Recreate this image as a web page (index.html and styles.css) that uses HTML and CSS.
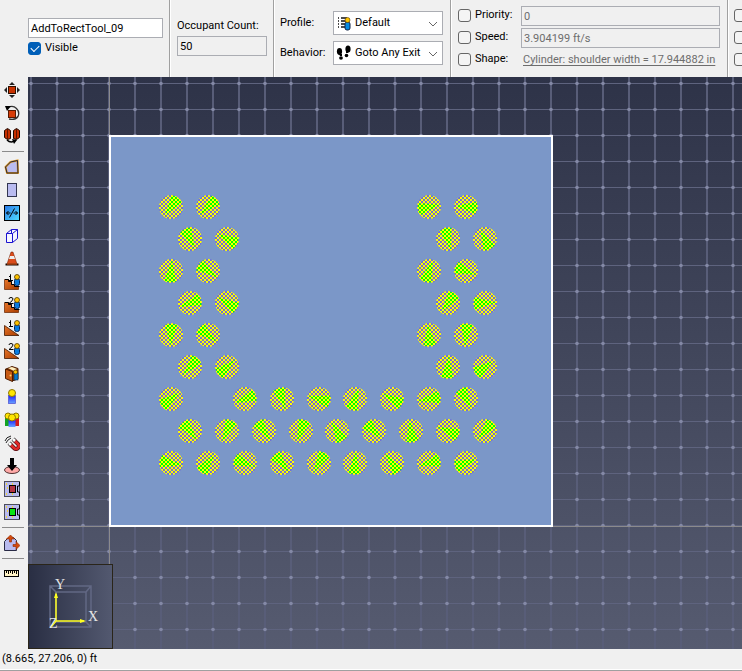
FILE: index.html
```html
<!DOCTYPE html>
<html lang="en">
<head>
<meta charset="utf-8">
<title>Occupant group editor</title>
<link rel="stylesheet" href="styles.css">
</head>
<body>
<div class="app">
  <header class="properties">
    <section class="panel panel-name">
      <input class="field field-name" type="text" value="AddToRectTool_09" aria-label="Name">
      <label class="check"><input type="checkbox" checked>Visible</label>
    </section>
    <section class="panel panel-count">
      <label for="count">Occupant Count:</label>
      <input class="field" id="count" type="text" value="50" readonly>
    </section>
    <section class="panel panel-profile">
      <label for="profile">Profile:</label>
      <div class="combo">
        <select id="profile"><option>Default</option></select>
        <svg class="combo-icon" viewBox="0 0 16 16" aria-hidden="true">
          <path d="M2 3h1M2 6h1M2 9h1M2 12h1M5 3h6M5 6h6M5 9h4M5 12h4" stroke="#111" stroke-width="1.500"/>
          <rect x="9" y="7" width="5" height="8" rx="2" fill="#078be0" stroke="#124"/>
          <circle cx="11.500" cy="5" r="2.500" fill="#ffc400" stroke="#543800" stroke-width=".6"/>
        </svg>
        <svg class="chevron" viewBox="0 0 10 6" aria-hidden="true"><path d="M1 1l4 4 4-4"/></svg>
      </div>
      <label for="behavior">Behavior:</label>
      <div class="combo">
        <select id="behavior"><option>Goto Any Exit</option></select>
        <svg class="combo-icon" viewBox="0 0 16 16" aria-hidden="true">
          <g fill="#000"><ellipse cx="3.500" cy="6.500" rx="2.600" ry="3.400"/><path d="M3 9h3v2H4z"/><ellipse cx="5" cy="13" rx="1.900" ry="1.800"/>
          <ellipse cx="12" cy="4" rx="2.600" ry="3.500"/><path d="M10 6h3l-1 2h-2z"/><ellipse cx="10.500" cy="10.500" rx="1.800" ry="1.700"/></g>
        </svg>
        <svg class="chevron" viewBox="0 0 10 6" aria-hidden="true"><path d="M1 1l4 4 4-4"/></svg>
      </div>
    </section>
    <section class="panel panel-overrides">
      <label class="check"><input type="checkbox">Priority:</label>
      <input class="field" type="text" value="0" aria-label="Priority value" disabled>
      <label class="check"><input type="checkbox">Speed:</label>
      <input class="field" type="text" value="3.904199 ft/s" aria-label="Speed value" disabled>
      <label class="check"><input type="checkbox">Shape:</label>
      <a class="shape-link" href="#">Cylinder: shoulder width = 17.944882 in</a>
    </section>
    <section class="panel panel-more">
      <input type="checkbox" aria-label="Override 1">
      <input type="checkbox" aria-label="Override 2">
      <input type="checkbox" aria-label="Override 3">
    </section>
  </header>

  <svg class="defs" aria-hidden="true">
    <defs>
      <linearGradient id="wood" x1="0" y1="0" x2="1" y2="1"><stop offset="0" stop-color="#e8762a"/><stop offset="1" stop-color="#a83c00"/></linearGradient>
      <linearGradient id="blue" x1="0" y1="0" x2="1" y2="1"><stop offset="0" stop-color="#2b78e8"/><stop offset="1" stop-color="#4fe0ff"/></linearGradient>
      <linearGradient id="suit" x1="0" y1="0" x2="0" y2="1"><stop offset="0" stop-color="#2020ff"/><stop offset="1" stop-color="#68a4ff"/></linearGradient>
      <symbol id="person" viewBox="0 0 16 16">
        <rect x="10.500" y="4.500" width="5" height="7" rx="2" fill="#087be0" stroke="#05295c"/>
        <circle cx="13" cy="3" r="2.500" fill="#ffc400" stroke="#4c3500" stroke-width=".8"/>
      </symbol>
      <symbol id="one" viewBox="0 0 16 16"><path d="M5 2.500h1.500V.5v6M5 6.500h4" fill="none" stroke="#000"/></symbol>
      <symbol id="two" viewBox="0 0 16 16"><path d="M5 2q0-1.500 2-1.500t2 1.500Q9 3.500 5 6.500h4.500" fill="none" stroke="#000"/></symbol>
      <symbol id="stairs" viewBox="0 0 16 16"><path d="M.5 15.500v-10h4v2h3v3h3v2h4v3z" fill="url(#wood)" stroke="#642200" stroke-width=".7"/><path d="M1 5.500h3.500v2h3v3h3v2h5" fill="none" stroke="#000"/></symbol>
      <symbol id="ramp" viewBox="0 0 16 16"><path d="M.5 5.500v10h14.500z" fill="url(#wood)" stroke="#421800" stroke-width=".8"/></symbol>
    </defs>
  </svg>

  <main class="workspace">
    <nav class="tools" aria-label="Tools">
      <button aria-label="Move"><svg viewBox="0 0 16 16"><rect x="4.500" y="4.500" width="7" height="7" fill="#c83200" stroke="#301000"/><path d="M8 0l3 3H5zM8 16l3-3H5zM0 8l3-3v6zM16 8l-3-3v6z" fill="#222"/></svg></button>
      <button aria-label="Rotate"><svg viewBox="0 0 16 16"><path d="M4 2.500q5-2.500 8.500 1t1.500 8q-3 4-9 2.500" fill="none" stroke="#333" stroke-width="1.300"/><path d="M1 1h6L3 6z" fill="#000"/><rect x="4.500" y="5.500" width="7" height="7" fill="#d63c08" stroke="#581800"/></svg></button>
      <button aria-label="Mirror"><svg viewBox="0 0 16 16"><path d="M.5 2.500l3-2 3 2v8l-3 1-3-2zM15.500 2.500l-3-2-3 2v8l3 1 3-2z" fill="#c83000" stroke="#200800"/><path d="M3.500 1v10M12.500 1v10" stroke="#611600"/><path d="M3 12q4 4 9 0" fill="none" stroke="#000" stroke-width="1.500"/><path d="M8 11l5 1-3 4z" fill="#000"/></svg></button>
      <hr>
      <button aria-label="Polygon room"><svg viewBox="0 0 16 16"><path d="M1.500 8l5-5 7-1.500.5 12.500H3z" fill="#babcf0" stroke="#e39a20" stroke-width="2"/><path d="M1.500 8l5-5 7-1.500.5 12.500H3z" fill="none" stroke="#25263c"/></svg></button>
      <button aria-label="Rectangular room"><svg viewBox="0 0 16 16"><rect x="3.500" y="1.500" width="9" height="13" fill="#babcf0" stroke="#333650"/></svg></button>
      <button aria-label="Wall"><svg viewBox="0 0 16 16"><rect x=".5" y=".5" width="15" height="15" fill="url(#blue)" stroke="#000"/><path d="M4.500 6l-2 2 2 2M2.500 8h4M11.500 6l2 2-2 2M13.500 8h-4M10.500 3.500l-5 9" fill="none" stroke="#000"/></svg></button>
      <button aria-label="Obstruction"><svg viewBox="0 0 16 16"><path d="M2.500 5.500l5-4h6v9l-5 4h-6zM2.500 5.500h6v9M8.500 5.500l5-4M7.500 1.500v4" fill="#f6f6ff" stroke="#1b12d0"/></svg></button>
      <button aria-label="Cone"><svg viewBox="0 0 16 16"><path d="M7 1h2l4 12H3z" fill="#dc4c1b" stroke="#651b00" stroke-width=".5"/><path d="M6 5h4l1 3H5z" fill="#eee"/><path d="M1.500 13.500h13" stroke="#1c0800" stroke-width="2"/><path d="M3 13h10" stroke="#f06420"/></svg></button>
      <button aria-label="One-point stairs"><svg viewBox="0 0 16 16"><use href="#stairs"/><use href="#person"/><use href="#one"/></svg></button>
      <button aria-label="Two-point stairs"><svg viewBox="0 0 16 16"><use href="#stairs"/><use href="#person"/><use href="#two"/></svg></button>
      <button aria-label="One-point ramp"><svg viewBox="0 0 16 16"><use href="#ramp"/><use href="#person"/><use href="#one"/></svg></button>
      <button aria-label="Two-point ramp"><svg viewBox="0 0 16 16"><use href="#ramp"/><use href="#person"/><use href="#two"/></svg></button>
      <button aria-label="Door"><svg viewBox="0 0 16 16"><path d="M2 3l6-2.500 6 2V13l-6 2z" fill="#8a3a08" stroke="#4c1c00"/><path d="M4 2l4-1 5 2-3 2z" fill="#fff0c0"/><path d="M1.500 3l7 2.500v10l-7-3z" fill="#c75a14" stroke="#4c1c00"/><rect x="10" y="7" width="4" height="7" fill="#0879cc" stroke="#042746" stroke-width=".6"/><circle cx="11.500" cy="6" r="2" fill="#ffc400" stroke="#4c3500" stroke-width=".6"/><circle cx="6.500" cy="9.500" r="1" fill="#ffd766"/></svg></button>
      <button aria-label="Occupant"><svg viewBox="0 0 16 16"><rect x="4.500" y="6.500" width="7" height="8" fill="url(#suit)" stroke="#4b4bd0" stroke-width=".7"/><circle cx="8" cy="4" r="3.500" fill="#ffe600" stroke="#8e7600"/></svg></button>
      <button aria-label="Occupant group"><svg viewBox="0 0 16 16"><rect x="1" y="6" width="4" height="8" fill="#12a322"/><rect x="11" y="6" width="4" height="8" fill="#d31b18"/><rect x="4.500" y="8" width="7" height="7" fill="url(#suit)"/><g fill="#ffe600" stroke="#8e7600"><circle cx="4" cy="4" r="3"/><circle cx="12" cy="4" r="3"/><circle cx="8" cy="5.500" r="3.500"/></g></svg></button>
      <button aria-label="Attractor"><svg viewBox="0 0 16 16"><path d="M6 9l4 4q2 2 4 0t0-4l-4-4" fill="none" stroke="#571015" stroke-width="4"/><path d="M6 9l4 4q2 2 4 0t0-4l-4-4" fill="none" stroke="#e02928" stroke-width="2.500"/><path d="M5 8l2 2M9 4l2 2" stroke="#444" stroke-width="4"/><path d="M5 8l2 2M9 4l2 2" stroke="#fff" stroke-width="2.500"/><path d="M1 6q1-4 6-5M2 8q1-3 5-5" fill="none" stroke="#222"/></svg></button>
      <button aria-label="Waypoint"><svg viewBox="0 0 16 16"><ellipse cx="8" cy="12" rx="7.500" ry="3.500" fill="#ffa9a7" stroke="#503030"/><path d="M6 0h4v7h3l-5 6-5-6h3z" fill="#000"/></svg></button>
      <button aria-label="Refuge area"><svg viewBox="0 0 16 16"><rect x=".5" y=".5" width="15" height="15" fill="#b9bbef" stroke="#4c4d5c"/><path d="M2 3h1M8 3h1M3 7h1M2 13h1M8 13h1" stroke="#ffe000" stroke-width="1.500"/><rect x="5.500" y="4.500" width="6" height="7" fill="#b33443" stroke="#000"/><path d="M15.500 1v4h-2v6h2v4" fill="none" stroke="#000"/></svg></button>
      <button aria-label="Target area"><svg viewBox="0 0 16 16"><rect x=".5" y=".5" width="15" height="15" fill="#b9bbef" stroke="#4c4d5c"/><path d="M2 3h1M8 3h1M3 7h1M2 13h1M8 13h1" stroke="#ffe000" stroke-width="1.500"/><rect x="5.500" y="4.500" width="6" height="7" fill="#08e413" stroke="#000"/><path d="M15.500 1v4h-2v6h2v4" fill="none" stroke="#000"/></svg></button>
      <hr>
      <button aria-label="Edit shape"><svg viewBox="0 0 16 16"><path d="M.5 15.500v-9l4-4h5l3 3v10z" fill="#b9bbef" stroke="#292a45"/><path d="M6.500 0l4 4h-3v3h-2V4h-3zM16 10.500l-4-4v3H9v2h3v3z" fill="#d44b0b" stroke="#8d2700" stroke-width=".6"/></svg></button>
      <hr>
      <button aria-label="Measure"><svg viewBox="0 0 16 16"><rect x=".5" y="4.500" width="14" height="6" fill="#fff2c5" stroke="#000"/><path d="M2.500 5v2M4.500 5v3M6.500 5v2M8.500 5v3M10.500 5v2M12.500 5v3" stroke="#000"/></svg></button>
    </nav>

    <div class="viewport">
      <svg class="scene" role="img" aria-label="Room with 50 occupants">
        <defs>
          <pattern id="grid" x="-10" y="-6" width="26" height="26" patternUnits="userSpaceOnUse">
            <path d="M13 0v26" stroke="#585d78" stroke-width="2"/>
            <path d="M0 12.500h26" stroke="#5e637e"/>
            <circle cx="13" cy="12.500" r="1.800" fill="#8489a6"/>
          </pattern>
          <pattern id="checker" width="4" height="4" patternUnits="userSpaceOnUse">
            <path d="M0 0h2v2H0zM2 2h2v2H2z" fill="#ffff00"/>
          </pattern>
        </defs>
        <rect width="100%" height="100%" fill="url(#grid)"/>
        <path d="M81.500 0v2000M0 449.500h4000" stroke="#8b8a8c"/>
        <rect x="82" y="59" width="442" height="390" fill="#7b97c8" stroke="#fff" stroke-width="2"/>
        <g id="occupants"></g>
      </svg>
      <svg class="triad" viewBox="0 0 85 85" aria-label="Axes">
        <defs><linearGradient id="triad-bg"><stop offset="0" stop-color="#292e43"/><stop offset="1" stop-color="#535970"/></linearGradient></defs>
        <rect x=".5" y=".5" width="84" height="84" fill="url(#triad-bg)" stroke="#2a2519"/>
        <path d="M22 22h41v41H22zM28 28h30v30H28zM22 22l6 6M63 22l-5 6M63 63l-5-5" fill="none" stroke="#626884" stroke-width="1.500"/>
        <path d="M28 30v27h28M28 57l-5 6" fill="none" stroke="#ffff20" stroke-width="1.500"/>
        <path d="M28 28l2 6h-4zM58 57l-6 2v-4z" fill="#ffff20"/>
        <g class="axis"><text x="27" y="25">Y</text><text x="60" y="57">X</text><text x="21" y="64">Z</text></g>
      </svg>
    </div>
  </main>

  <footer class="status">(8.665, 27.206, 0) ft</footer>
</div>
<script src="scene.js"></script>
</body>
</html>
```
FILE: scene.js
```js
// Each row: y, then [x, heading in degrees] of every occupant.
const rows = [
  [130, [143, -55], [180, -42], [401, 168], [438, 5]],
  [162, [162, -115], [199, 25], [420, -105], [457, 65]],
  [194, [143, 95], [180, -145], [401, 110], [438, -160]],
  [226, [162, -20], [199, 30], [420, -55], [457, 178]],
  [258, [143, -90], [180, -140], [401, 85], [438, -85]],
  [290, [162, -50], [199, 140], [420, 95], [457, 145]],
  [322, [143, 145], [217, -22], [254, -108], [291, 15], [327, 110], [364, 28], [401, -10], [438, -118]],
  [354, [162, -130], [199, -65], [236, -125], [273, -70], [309, 60], [346, -135], [383, 82], [420, 22], [457, -50]],
  [386, [143, -170], [180, 125], [217, -160], [254, -130], [291, -60], [327, 95], [364, 55], [401, -15], [438, 160]]
];

const ns = "http://www.w3.org/2000/svg";
const layer = document.getElementById("occupants");

function add(parent, tag, attrs) {
  const node = document.createElementNS(ns, tag);
  for (const key in attrs) node.setAttribute(key, attrs[key]);
  parent.appendChild(node);
}

for (const [y, ...people] of rows) {
  for (const [x, heading] of people) {
    const g = document.createElementNS(ns, "g");
    g.setAttribute("transform", `translate(${x} ${y})`);
    add(g, "circle", { r: 12, class: "body" });
    add(g, "path", { d: "M-11 0L10 -6Q12 0 10 6z", transform: `rotate(${heading})`, class: "heading" });
    add(g, "circle", { r: 12, class: "mesh" });
    layer.appendChild(g);
  }
}
```
FILE: styles.css
```css
* { box-sizing: border-box; }

body {
  margin: 0;
  background: #f0f0f0;
  color: #000;
  font: 11px/14px Roboto, "Noto Sans", sans-serif;
}

.app {
  display: flex;
  flex-direction: column;
  height: 100vh;
  overflow: hidden;
}

.defs { position: absolute; width: 0; height: 0; }

.properties {
  display: flex;
  height: 77px;
  overflow: hidden;
}

.panel {
  flex: none;
  border-right: 1px solid #a0a0a0;
  box-shadow: 1px 0 #fff;
}

.panel-name { width: 170px; padding: 18px 6px 0 28px; }
.panel-count { width: 104px; padding: 19px 6px 0 7px; }
.panel-count label { display: block; margin-bottom: 3px; white-space: nowrap; }

.panel-profile {
  display: grid;
  grid-template-columns: 53px 110px;
  grid-auto-rows: 24px;
  row-gap: 6px;
  align-items: center;
  width: 177px;
  padding: 11px 6px;
}

.panel-overrides {
  display: grid;
  grid-template-columns: 63px 199px;
  grid-auto-rows: 20px;
  row-gap: 2px;
  align-items: center;
  width: 277px;
  padding: 6px 7px;
}
.panel-overrides .check { padding-bottom: 2px; }

.panel-more {
  display: flex;
  flex-direction: column;
  gap: 9px;
  border: 0;
  padding: 9px 6px;
}

.field {
  display: block;
  width: 100%;
  height: 20px;
  padding: 0 2px;
  border: 1px solid #abadb3;
  border-radius: 0;
  background: #f0f0f0;
  color: #000;
  font: inherit;
}
.field:disabled { color: #6d6d6d; }
.field-name { background: #fff; }

.check { display: flex; align-items: center; gap: 4px; white-space: nowrap; }
.panel-name .check { margin-top: 3px; }

input[type="checkbox"] {
  appearance: none;
  flex: none;
  width: 13px;
  height: 13px;
  margin: 0;
  border: 1px solid #666;
  border-radius: 3px;
  background: #f4f4f4;
}
input[type="checkbox"]:checked {
  display: grid;
  place-items: center;
  border-color: #005fb8;
  background: #005fb8;
}
input[type="checkbox"]:checked::before {
  content: "";
  width: 7px;
  height: 4px;
  margin-bottom: 2px;
  border: solid #fff;
  border-width: 0 0 1px 1px;
  transform: rotate(-45deg);
}

.combo { position: relative; }
.combo select {
  appearance: none;
  display: block;
  width: 100%;
  height: 24px;
  padding: 0 18px 0 21px;
  border: 1px solid #abadb3;
  border-radius: 0;
  background: #fff;
  color: #000;
  font: inherit;
}
.combo-icon { position: absolute; left: 3px; top: 4px; width: 16px; height: 16px; pointer-events: none; }
.chevron { position: absolute; right: 5px; top: 10px; width: 10px; height: 6px; pointer-events: none; }
.chevron path { fill: none; stroke: #666; }

.shape-link {
  padding-left: 2px;
  color: #6d6d6d;
  text-underline-offset: 2px;
  white-space: nowrap;
}

.workspace { display: flex; flex: 1; min-height: 0; }

.tools {
  display: flex;
  flex-direction: column;
  width: 28px;
  padding-top: 1px;
}
.tools button {
  flex: none;
  display: flex;
  align-items: center;
  height: 23px;
  padding: 0 4px;
  border: 0;
  background: none;
}
.tools svg { width: 16px; height: 16px; }
.tools hr {
  flex: none;
  width: 22px;
  height: 1px;
  margin: 4px 2px 3px;
  border: 0;
  background: #8c8c8c;
}

.viewport {
  position: relative;
  flex: 1;
  overflow: hidden;
  background: linear-gradient(#2e3348, #565b70);
}
.scene { display: block; width: 100%; height: 100%; }
.body { fill: #6e6ed8; }
.heading { fill: #00ff00; }
.mesh { fill: url(#checker); }

.triad { position: absolute; left: 0; bottom: 0; width: 85px; height: 85px; }
.axis { fill: #e6e6e6; font: 14px "Liberation Serif", serif; }

.status {
  height: 22px;
  padding: 3px 2px;
  border-bottom: 1px solid #a0a0a0;
  box-shadow: inset 0 -1px #fff;
}
```
